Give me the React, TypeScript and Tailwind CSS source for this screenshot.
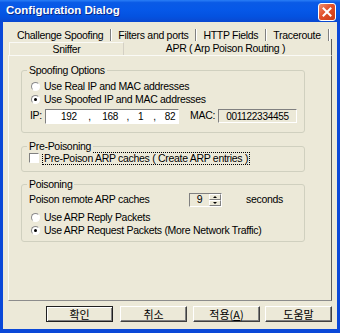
import React from 'react';

const font = { fontFamily: '"Liberation Sans", "Noto Sans CJK KR", sans-serif' };

function Radio({ checked, label }: { checked?: boolean; label: string }) {
  return (
    <div className="flex h-[13px] items-center whitespace-nowrap">
      <span className="relative ml-[9px] mr-[4px] flex h-[9px] w-[9px] shrink-0 items-center justify-center rounded-full border border-[#8a8a8a] border-b-white border-r-white bg-white">
        {checked ? <span className="h-[3px] w-[3px] rounded-full bg-black" /> : null}
      </span>
      <span>{label}</span>
    </div>
  );
}

function Group({
  title,
  className = '',
  children,
}: {
  title: string;
  className?: string;
  children: React.ReactNode;
}) {
  return (
    <div className={`relative w-[284px] rounded-[3px] border border-[#d0d0bf] ${className}`.trim()}>
      <span className="absolute -top-[8px] left-[5px] whitespace-nowrap bg-[#ece9d8] px-[2px] leading-[14px]">{title}</span>
      {children}
    </div>
  );
}

function Button({ label, isDefault = false }: { label: React.ReactNode; isDefault?: boolean }) {
  return (
    <div
      className={`flex h-[16px] w-[67px] items-center justify-center border bg-[#ece9d8] text-[11px] leading-none tracking-normal ${
        isDefault
          ? 'border-[#202020] shadow-[inset_1px_1px_0_#fff,inset_-1px_-1px_0_#808080]'
          : 'border-white border-b-[#404040] border-r-[#404040] shadow-[inset_-1px_-1px_0_#808080]'
      }`}
      style={{ fontFamily: '"Noto Sans CJK KR", "Liberation Sans", sans-serif' }}
    >
      {label}
    </div>
  );
}

function Sep() {
  return <span className="mx-[7px] h-[12px] w-[1px] shrink-0 bg-[#808080] shadow-[1px_0_0_#fff]" />;
}

export default function App() {
  return (
    <div
      className="flex h-[333px] w-[340px] flex-col overflow-hidden bg-[#0a48d8] text-[10.5px] tracking-[-0.3px] text-black"
      style={font}
    >
      {/* title bar */}
      <div className="flex h-[22px] shrink-0 items-center justify-between bg-[linear-gradient(to_bottom,#2a7ef6_0%,#0a5ae6_12%,#0658e8_45%,#0452e0_75%,#0a48d0_100%)] pl-[6px] pr-[4px]">
        <span className="whitespace-nowrap text-[11.5px] font-bold tracking-normal text-white [text-shadow:1px_1px_0_#0a2a8a]">
          Configuration Dialog
        </span>
        <div className="mt-[2px] flex h-[18px] w-[18px] items-center justify-center rounded-[3px] border border-white bg-[linear-gradient(135deg,#f09070_0%,#e2502a_45%,#c83a14_100%)]">
          <svg width="10" height="10" viewBox="0 0 10 10">
            <path d="M1.5 1.5 L8.5 8.5 M8.5 1.5 L1.5 8.5" stroke="#fff" strokeWidth="2" strokeLinecap="square" />
          </svg>
        </div>
      </div>

      {/* body */}
      <div className="mx-[3px] mb-[4px] flex flex-1 flex-col whitespace-nowrap bg-[#ece9d8] pt-[6px]">
        {/* tab row 1 */}
        <div className="flex h-[14px] items-center pl-[14px] leading-[14px]">
          <span>Challenge Spoofing</span>
          <Sep />
          <span>Filters and ports</span>
          <Sep />
          <span>HTTP Fields</span>
          <Sep />
          <span>Traceroute</span>
          <Sep />
        </div>
        {/* tab row 2 */}
        <div className="flex h-[13px] pl-[6px]">
          <div className="flex w-[115px] items-center justify-center border border-b-0 border-[#fafaf6] border-r-[#d4d0c4] leading-[13px]">
            Sniffer
          </div>
          <div className="-mt-[3px] flex flex-1 items-start justify-center border-r border-[#5a5a5a] pt-[2px] leading-[14px]">
            <span className="-ml-[4px]">APR ( Arp Poison Routing )</span>
          </div>
          <div className="w-[5px]" />
        </div>

        {/* tab panel */}
        <div className="ml-[5px] mr-[5px] flex h-[246px] flex-col border border-[#fafaf6] border-b-[#8c8c8c] border-r-[#5a5a5a] pl-[12px] pt-[14px]">
          <Group title="Spoofing Options" className="h-[63px] pt-[9px]">
            <Radio label="Use Real IP and MAC addresses" />
            <Radio checked label="Use Spoofed IP and MAC addresses" />
            <div className="mt-[3px] flex h-[14px] items-center">
              <span className="ml-[8px] mr-[2px] w-[13px]">IP:</span>
              <div className="flex h-[15px] w-[134px] items-center border border-[#808080] border-b-white border-r-white bg-white pl-[12px] text-[10px]">
                <span className="w-[22px] text-center">192</span>
                <span className="w-[20px] text-center">,</span>
                <span className="w-[22px] text-center">168</span>
                <span className="w-[14px] text-center">,</span>
                <span className="w-[12px] text-center">1</span>
                <span className="w-[16px] text-center">,</span>
                <span className="w-[16px] text-center">82</span>
              </div>
              <span className="ml-[11px] w-[28px]">MAC:</span>
              <div className="flex h-[14px] w-[79px] items-center justify-center border border-[#808080] border-b-white border-r-white bg-[#ece9d8] text-[10px]">
                001122334455
              </div>
            </div>
          </Group>

          <Group title="Pre-Poisoning" className="mt-[13px] h-[26px] pt-[5px]">
            <div className="flex h-[12px] items-center">
              <span className="ml-[7px] mr-[3px] h-[10px] w-[10px] border border-[#808080] border-b-white border-r-white bg-white" />
              <span className="border border-dotted border-black px-[1px] leading-[11px]">
                Pre-Poison ARP caches ( Create ARP entries )
              </span>
            </div>
          </Group>

          <Group title="Poisoning" className="mt-[12px] h-[58px] pt-[7px]">
            <div className="flex h-[15px] items-center">
              <span className="ml-[7px] w-[160px]">Poison remote ARP caches</span>
              <div className="flex h-[14px] w-[33px] items-center border border-[#808080] border-b-white border-r-white bg-[#ece9d8]">
                <span className="flex-1 text-center">9</span>
                <div className="flex h-[12px] w-[12px] flex-col">
                  <div className="flex h-[6px] items-center justify-center border border-white border-b-[#808080] border-r-[#808080]">
                    <span className="h-0 w-0 border-x-[2px] border-b-[2px] border-x-transparent border-b-black" />
                  </div>
                  <div className="flex h-[6px] items-center justify-center border border-white border-b-[#808080] border-r-[#808080]">
                    <span className="h-0 w-0 border-x-[2px] border-t-[2px] border-x-transparent border-t-black" />
                  </div>
                </div>
              </div>
              <span className="ml-[24px]">seconds</span>
            </div>
            <div className="mt-[4px]">
              <Radio label="Use ARP Reply Packets" />
              <Radio checked label="Use ARP Request Packets (More Network Traffic)" />
            </div>
          </Group>
        </div>

        {/* buttons */}
        <div className="mt-[5px] flex items-center pl-[43px]">
          <Button isDefault label="확인" />
          <div className="w-[7px]" />
          <Button label="취소" />
          <div className="w-[6px]" />
          <Button label={<span>적용(<span className="underline">A</span>)</span>} />
          <div className="w-[5px]" />
          <Button label="도움말" />
        </div>
      </div>
    </div>
  );
}
